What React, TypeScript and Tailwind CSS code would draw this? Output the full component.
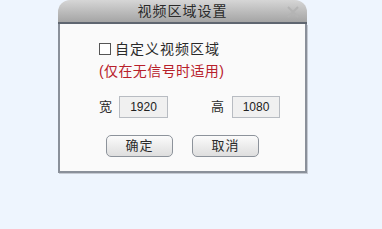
export default function App() {
  return (
    <div
      className="h-[229px] w-[382px] bg-[#eef5fe] relative"
      style={{ fontFamily: '"Liberation Sans", "Noto Sans CJK SC", sans-serif' }}
    >
      <div className="absolute left-[58px] top-0 w-[249px] h-[173px] flex flex-col">
        {/* title bar */}
        <div className="relative h-[24px] rounded-t-[12px] bg-gradient-to-b from-[#d6d6d6] to-[#a5a5a5] border-b-2 border-[#5f6670] flex items-center justify-center">
          <span className="text-[14px] text-[#2a2a2a] leading-none tracking-[1px]">视频区域设置</span>
          <svg className="absolute right-[8px] top-[6px]" width="12" height="12" viewBox="0 0 12 12">
            <path d="M1 1L11 11M11 1L1 11" stroke="#b4b4b4" strokeWidth="2" />
          </svg>
        </div>
        {/* body */}
        <div className="flex-1 bg-[#fafafa] border-x-2 border-b-2 border-[#8a909a] shadow-[1px_1px_0_#c5cad3] flex flex-col pl-[39px] pt-[16px]">
          <div className="flex items-center h-[18px]">
            <span className="w-[12px] h-[12px] border border-[#555] bg-white mr-[4px]" />
            <span className="text-[14px] text-[#2a2a2a] tracking-[1px]">自定义视频区域</span>
          </div>
          <div className="h-[20px] mt-[3px] text-[14px] text-[#b8202a] flex items-center tracking-[0.4px]">
            (仅在无信号时适用)
          </div>
          <div className="flex items-center mt-[15px] h-[22px]">
            <span className="text-[13px] text-[#2a2a2a] w-[20px]">宽</span>
            <div className="w-[49px] h-[22px] border border-[#b8bcc2] bg-[#f0f0f0] flex items-center justify-center text-[12px] text-[#222]">
              1920
            </div>
            <span className="text-[13px] text-[#2a2a2a] ml-[43px] w-[21px]">高</span>
            <div className="w-[48px] h-[22px] border border-[#b8bcc2] bg-[#f0f0f0] flex items-center justify-center text-[12px] text-[#222]">
              1080
            </div>
          </div>
          <div className="flex mt-[17px] ml-[7px] gap-[19px]">
            <button className="w-[67px] h-[22px] rounded-[5px] border border-[#8d939b] bg-gradient-to-b from-[#fbfbfb] to-[#dedede] text-[13px] text-[#2a2a2a] tracking-[1px]">
              确定
            </button>
            <button className="w-[67px] h-[22px] rounded-[5px] border border-[#8d939b] bg-gradient-to-b from-[#fbfbfb] to-[#dedede] text-[13px] text-[#2a2a2a] tracking-[1px]">
              取消
            </button>
          </div>
        </div>
      </div>
    </div>
  );
}
